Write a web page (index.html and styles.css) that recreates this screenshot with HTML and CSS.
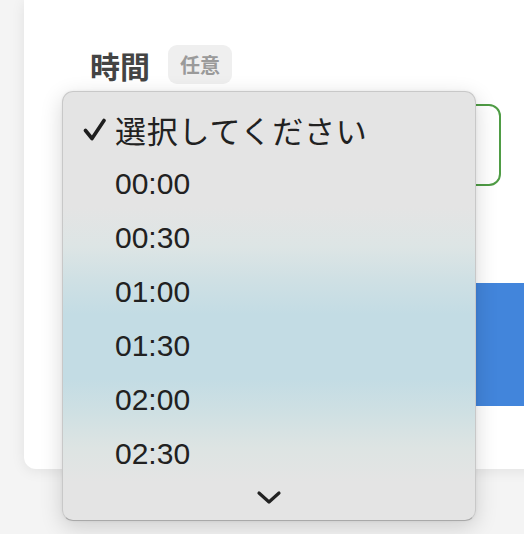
FILE: index.html
```html
<!DOCTYPE html>
<html lang="ja">
<head>
<meta charset="utf-8">
<link rel="stylesheet" href="styles.css">
</head>
<body>
<div class="page">
  <div class="card">
    <div class="label-row">
      <span class="label">時間</span>
      <span class="badge">任意</span>
    </div>
    <div class="select"></div>
    <div class="button"></div>
  </div>
</div>
<div class="menu">
  <div class="item selected">
    <svg class="check" width="24" height="24" viewBox="0 0 24 24"><path d="M2.5 12.5 L9 20.5 L21 2.5" fill="none" stroke="#1e1e1e" stroke-width="3.6" stroke-linecap="round" stroke-linejoin="round"/></svg>
    <span>選択してください</span>
  </div>
  <div class="item"><span>00:00</span></div>
  <div class="item"><span>00:30</span></div>
  <div class="item"><span>01:00</span></div>
  <div class="item"><span>01:30</span></div>
  <div class="item"><span>02:00</span></div>
  <div class="item"><span>02:30</span></div>
  <div class="more">
    <svg width="26" height="15" viewBox="0 0 26 15"><path d="M3 3 L13 12 L23 3" fill="none" stroke="#222" stroke-width="3.2" stroke-linecap="round" stroke-linejoin="round"/></svg>
  </div>
</div>
</body>
</html>
```
FILE: styles.css
```css
html, body {
  margin: 0;
  padding: 0;
}
body {
  background: #f4f4f4;
  width: 524px;
  height: 534px;
  overflow: hidden;
  position: relative;
  font-family: "Liberation Sans", "Noto Sans CJK JP", sans-serif;
}
.page {
  padding-left: 24px;
}
.card {
  background: #ffffff;
  height: 469px;
  width: 520px;
  border-radius: 0 0 0 12px;
  box-shadow: 0 2px 14px rgba(0, 0, 0, 0.08);
  padding: 45px 0 0 66px;
  box-sizing: border-box;
}
.label-row {
  display: flex;
  align-items: center;
  height: 39px;
}
.label {
  font-family: "Noto Sans CJK JP", sans-serif;
  font-weight: 700;
  font-size: 30px;
  color: #444444;
  line-height: 1;
}
.badge {
  margin-left: 18px;
  height: 39px;
  padding: 0 12px;
  box-sizing: border-box;
  display: flex;
  align-items: center;
  background: #efefef;
  border-radius: 9px;
  font-family: "Noto Sans CJK JP", sans-serif;
  font-weight: 700;
  font-size: 20px;
  color: #9a9a9a;
}
.select {
  margin-top: 20px;
  width: 411px;
  height: 82px;
  box-sizing: border-box;
  border: 2px solid #4f9c45;
  border-radius: 12px;
}
.button {
  margin-top: 97px;
  width: 460px;
  height: 123px;
  background: #4285db;
}
.menu {
  position: absolute;
  left: 62px;
  top: 91px;
  width: 414px;
  height: 430px;
  box-sizing: border-box;
  border-radius: 11px;
  border: 1px solid #c8c8c8;
  border-bottom-color: #a9a9a9;
  background: linear-gradient(to bottom,
    #e4e4e4 0%,
    #e4e4e4 27%,
    #dde5e5 36%,
    #cfe0e4 44%,
    #c3dce4 52%,
    #c3dce4 67%,
    #cfe0e3 75%,
    #dde4e3 83%,
    #e4e4e4 91%,
    #e4e4e4 100%);
  box-shadow: 0 6px 22px rgba(0, 0, 0, 0.16), 0 0 3px rgba(0, 0, 0, 0.06);
  padding-top: 11px;
  color: #212121;
}
.item {
  height: 54px;
  display: flex;
  align-items: center;
  padding-left: 52px;
  position: relative;
  font-size: 30px;
}
.item span {
  line-height: 1;
}
.selected span {
  font-family: "Noto Sans CJK JP", sans-serif;
  font-size: 31px;
  letter-spacing: 0.8px;
  position: relative;
  top: -1px;
}
.check {
  position: absolute;
  left: 20px;
  top: 15px;
}
.more {
  display: flex;
  justify-content: center;
  padding-top: 9px;
}
```
